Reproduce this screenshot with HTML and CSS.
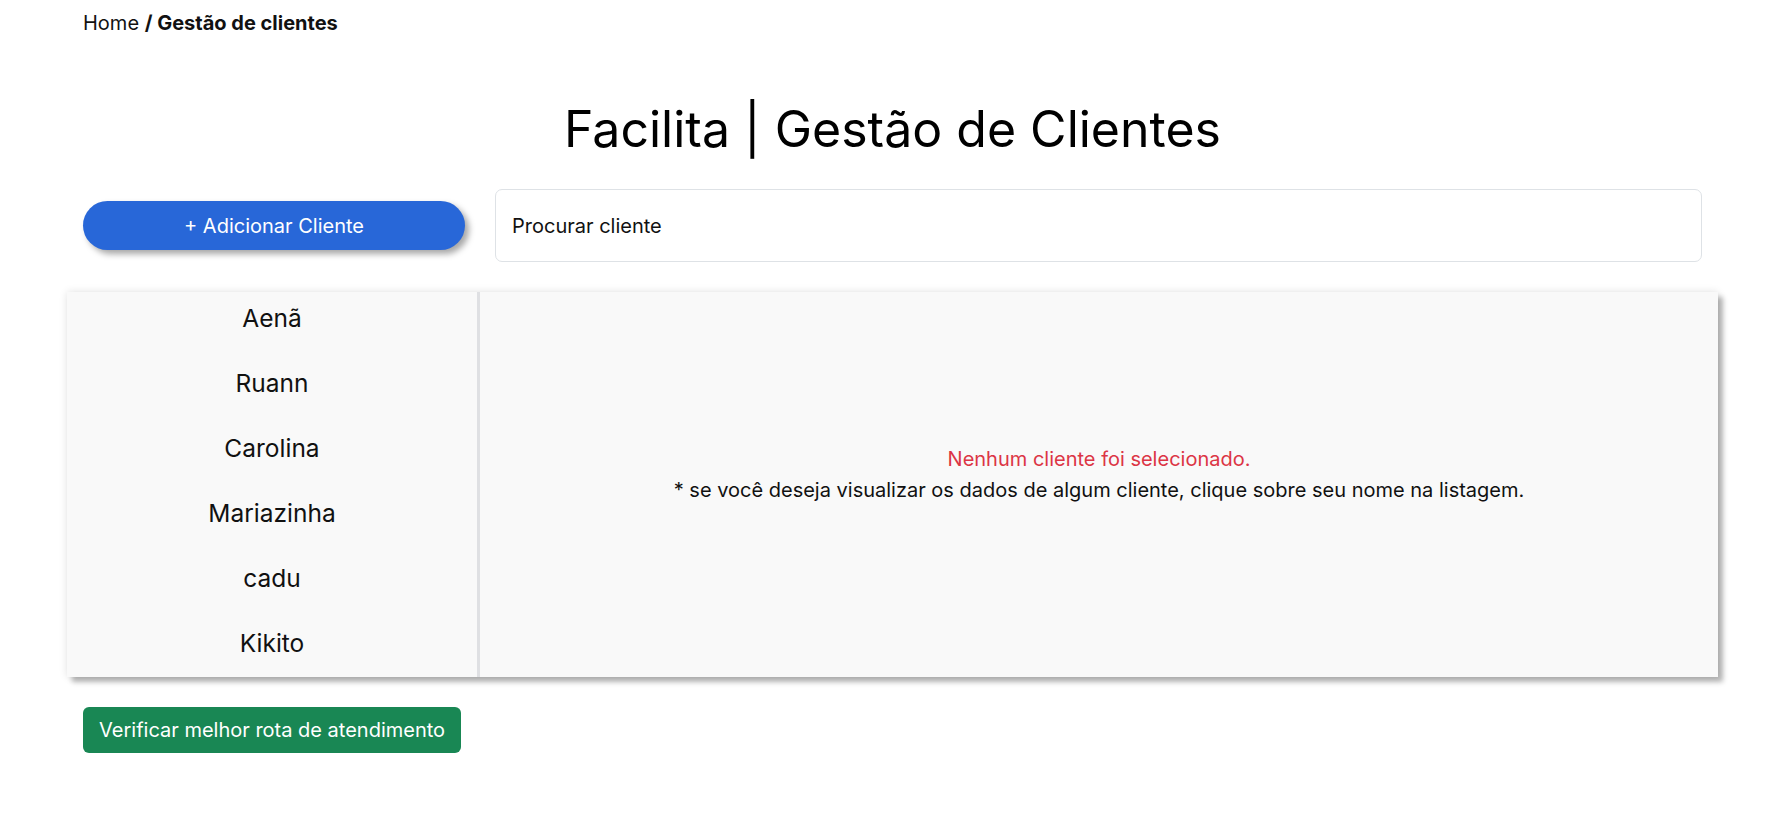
FILE: index.html
```html
<!DOCTYPE html>
<html lang="pt-BR">
<head>
<meta charset="utf-8">
<title>Facilita | Gestão de Clientes</title>
<link rel="stylesheet" href="styles.css">
</head>
<body>
<div class="container">
  <nav class="breadcrumb"><span>Home</span> <strong>/ Gestão de clientes</strong></nav>
  <h1 class="title">Facilita | Gestão de Clientes</h1>
  <div class="toolbar">
    <button class="btn-add">+ Adicionar Cliente</button>
    <div class="search">Procurar cliente</div>
  </div>
  <div class="panel">
    <ul class="client-list">
      <li>Aenã</li>
      <li>Ruann</li>
      <li>Carolina</li>
      <li>Mariazinha</li>
      <li>cadu</li>
      <li>Kikito</li>
    </ul>
    <div class="details">
      <p class="empty">Nenhum cliente foi selecionado.</p>
      <p class="hint">* se você deseja visualizar os dados de algum cliente, clique sobre seu nome na listagem.</p>
    </div>
  </div>
  <button class="btn-route">Verificar melhor rota de atendimento</button>
</div>
</body>
</html>
```

FILE: styles.css
```css
* { box-sizing: border-box; }
html, body { margin: 0; padding: 0; background: #fff; }
body {
  font-family: Inter, "Noto Sans", sans-serif;
  font-size: 20px;
  line-height: 1.5;
  color: #111;
}
.container {
  width: 1619px;
  margin-left: 83px;
  padding-top: 8px;
}
.breadcrumb { font-size: 20px; line-height: 30px; }
.breadcrumb strong { font-weight: 700; }
.title {
  margin: 61px 0 0;
  font-size: 50px;
  font-weight: 400;
  line-height: 60px;
  text-align: center;
  color: #000;
}
.toolbar {
  margin-top: 30px;
  display: flex;
  align-items: center;
  gap: 30px;
}
.btn-add {
  flex: 0 0 382px;
  height: 49px;
  border: none;
  border-radius: 25px;
  background: #2867d8;
  color: #fff;
  font-family: inherit;
  font-size: 20px;
  box-shadow: 4px 4px 6px rgba(0,0,0,0.35);
}
.search {
  flex: 1;
  height: 73px;
  border: 1px solid #dee2e6;
  border-radius: 7px;
  padding: 0 16px;
  display: flex;
  align-items: center;
  font-size: 20px;
  color: #111;
}
.panel {
  margin: 30px -16px 0;
  height: 385px;
  display: flex;
  background: #f9f9f9;
  box-shadow: 5px 5px 5px rgba(0,0,0,0.28), 0 0 8px rgba(0,0,0,0.12);
}
.client-list {
  list-style: none;
  margin: 0;
  padding: 11px 0 0;
  width: 413px;
  border-right: 3px solid #dfe0e3;
  display: flex;
  flex-direction: column;
  gap: 35px;
}
.client-list li {
  text-align: center;
  font-size: 24.5px;
  line-height: 30px;
  color: #111;
}
.details {
  flex: 1;
  display: flex;
  flex-direction: column;
  align-items: center;
  justify-content: center;
  padding-bottom: 21px;
}
.details p { margin: 0; line-height: 30px; }
.empty { color: #dc3545; margin-bottom: 1px !important; }
.hint { color: #111; }
.btn-route {
  margin-top: 30px;
  height: 46px;
  padding: 0 16px;
  border: none;
  border-radius: 6px;
  background: #198754;
  color: #fff;
  font-family: inherit;
  font-size: 20px;
}
```
